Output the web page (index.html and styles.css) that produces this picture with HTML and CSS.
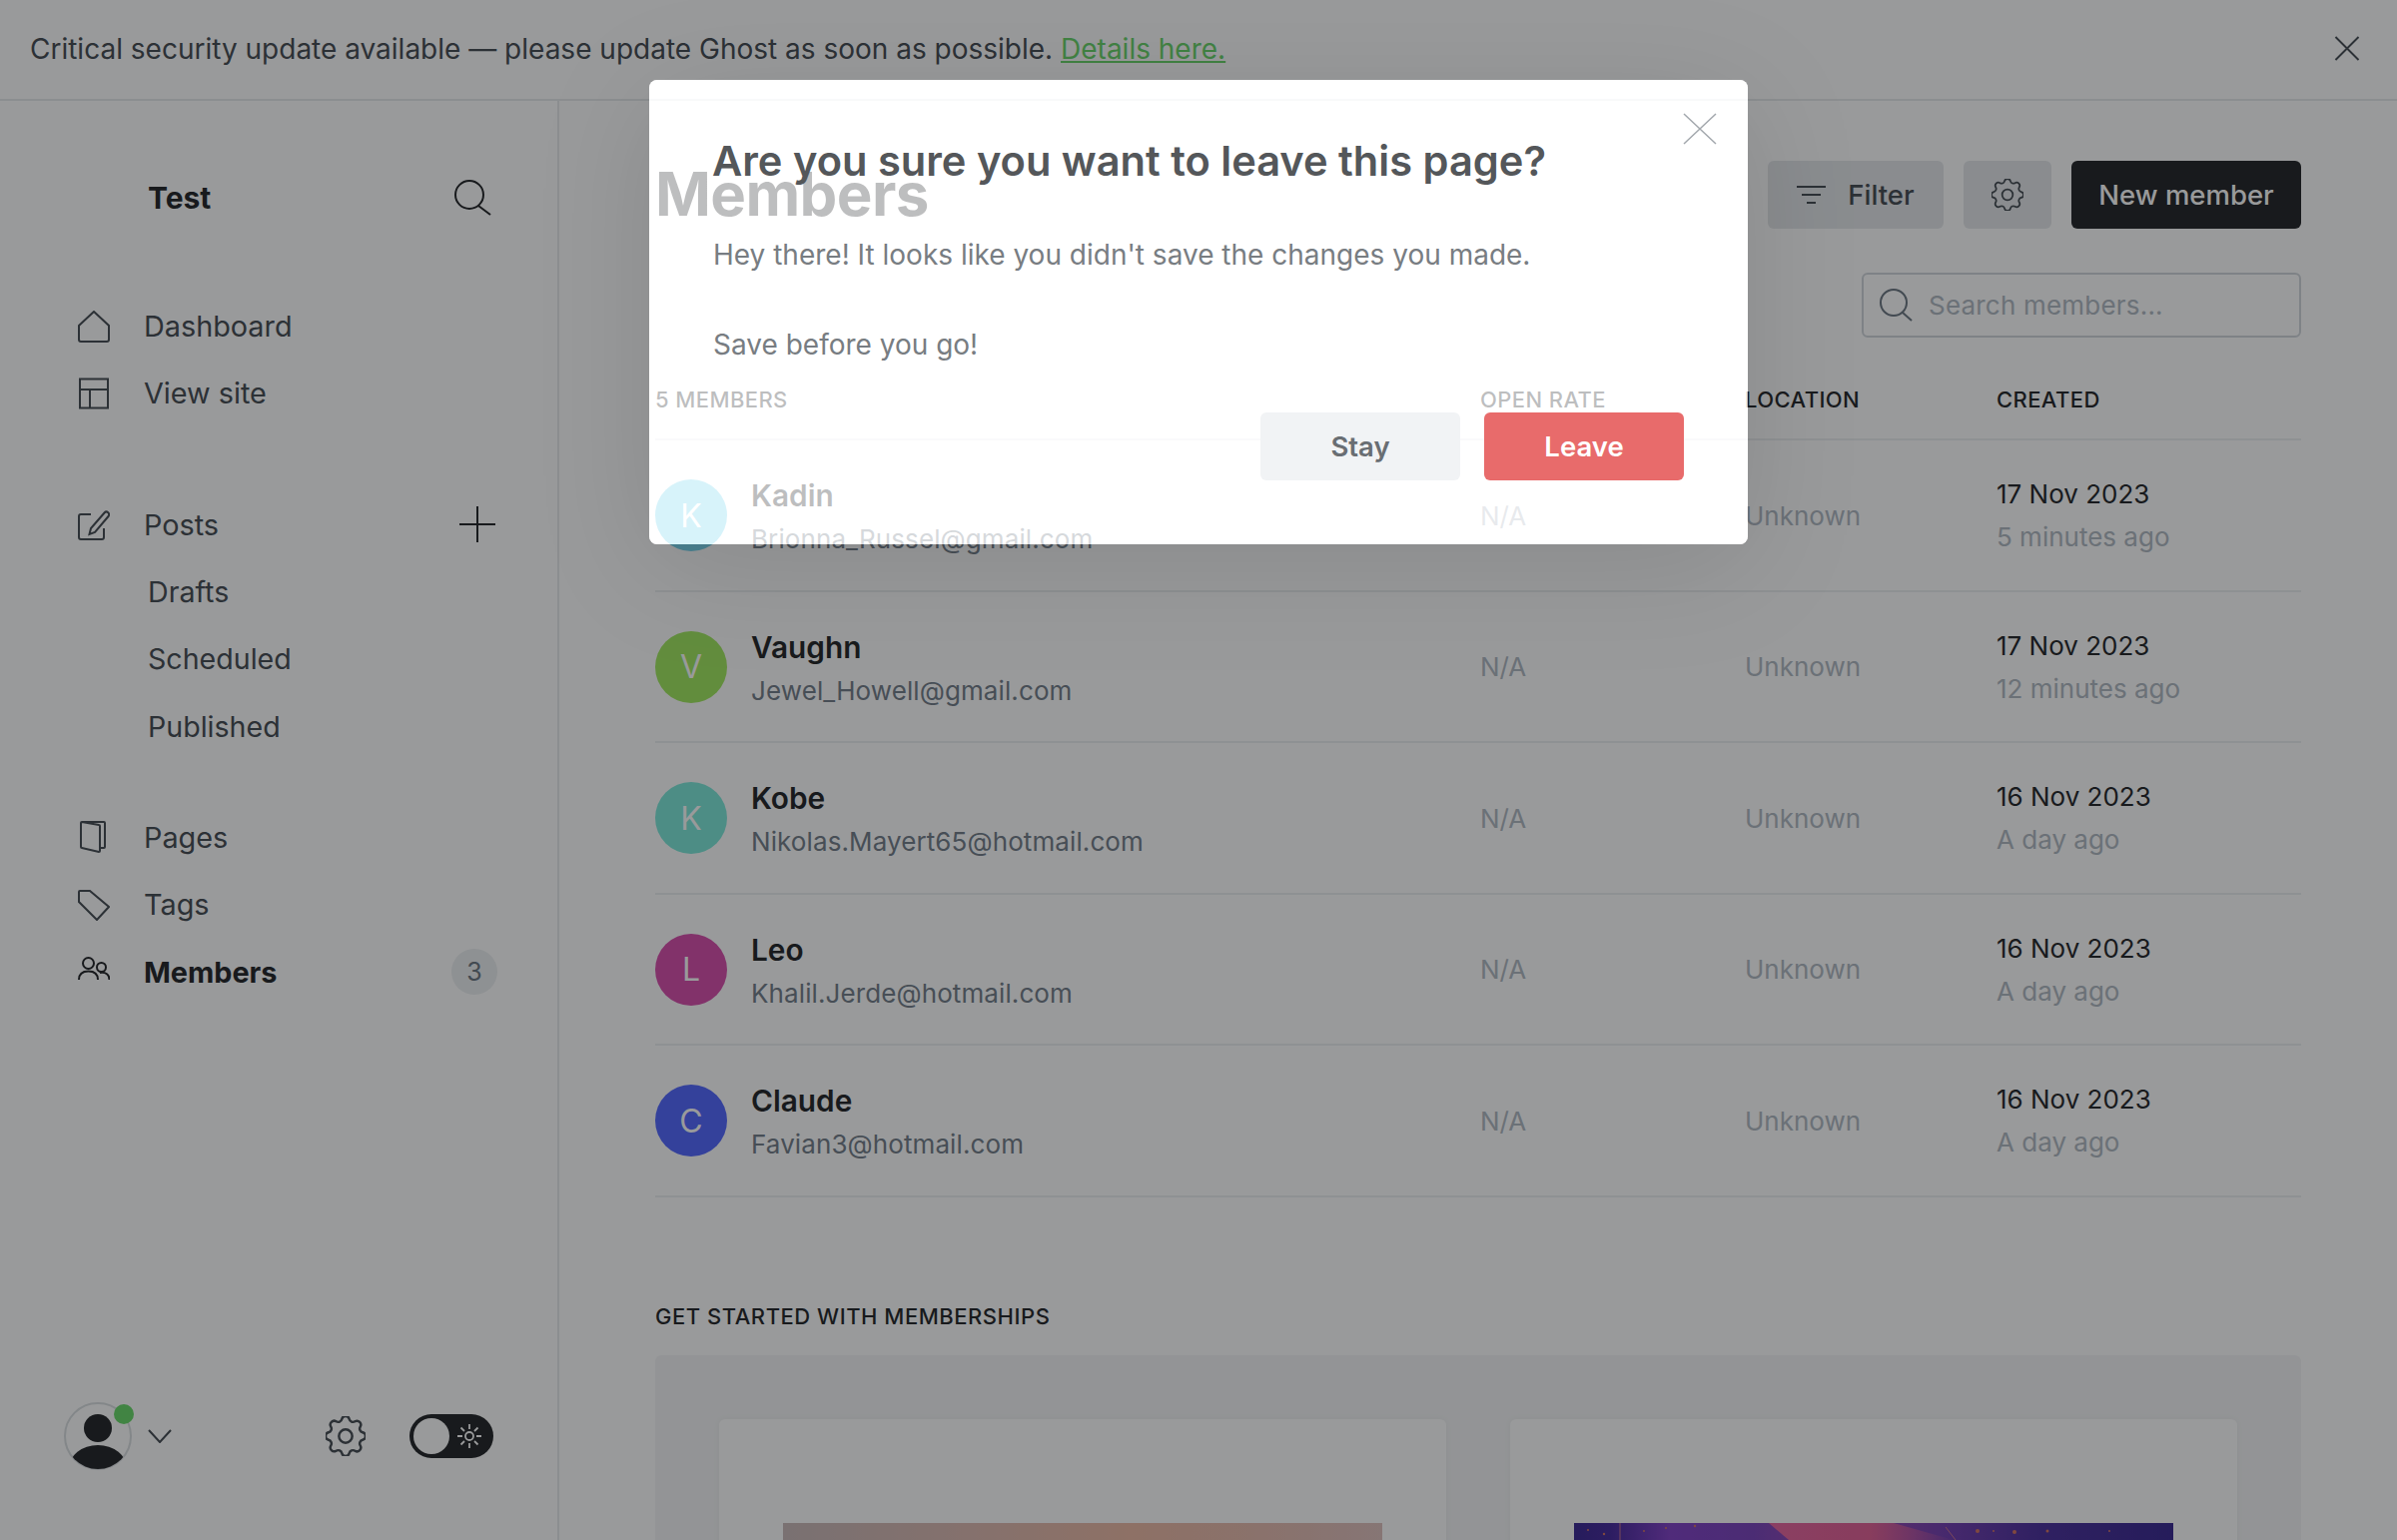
FILE: index.html
```html
<!DOCTYPE html>
<html lang="en">
<head>
<meta charset="utf-8">
<title>Members</title>
<link rel="stylesheet" href="styles.css">
</head>
<body>
<div class="app">
  <header class="banner">
    <p class="banner-text">Critical security update available — please update Ghost as soon as possible. <a href="#">Details here.</a></p>
    <svg class="banner-close" viewBox="0 0 26 26"><path d="M1 1 25 25M25 1 1 25"/></svg>
  </header>
  <div class="shell">
    <aside class="sidebar">
      <div class="brand">
        <span class="brand-name">Test</span>
        <svg class="brand-search" viewBox="0 0 38 36"><circle cx="16" cy="15" r="14"/><path d="M25 26 37 35"/></svg>
      </div>
      <nav class="nav-group">
        <a class="nav-row"><svg class="nav-icon" viewBox="0 0 32 32"><path d="M1 15 16 1 31 15V29a2 2 0 0 1-2 2H3a2 2 0 0 1-2-2Z"/></svg>Dashboard</a>
        <a class="nav-row"><svg class="nav-icon" viewBox="0 0 32 32"><path d="M2 1.500H30V30.500H2ZM2 12H30M12 12V30.500"/></svg>View site</a>
      </nav>
      <nav class="nav-group posts-group">
        <a class="nav-row"><svg class="nav-icon" viewBox="0 0 32 32"><path d="M13 6H3a2 2 0 0 0-2 2V29a2 2 0 0 0 2 2H24a2 2 0 0 0 2-2V20"/><path d="M13 20 11.500 26 17 24 30.500 8a2.500 2.500 0 0 0-4-3.500Z"/></svg>Posts<svg class="nav-plus" viewBox="0 0 36 36"><path d="M18 0V36M0 18H36"/></svg></a>
        <a class="nav-row nav-sub">Drafts</a>
        <a class="nav-row nav-sub">Scheduled</a>
        <a class="nav-row nav-sub">Published</a>
      </nav>
      <nav class="nav-group pages-group">
        <a class="nav-row"><svg class="nav-icon" viewBox="0 0 32 32"><path d="M4 1H26a1 1 0 0 1 1 1V26a1 1 0 0 1-1 1H22"/><path d="M4 1 21 4a1 1 0 0 1 1 1V30a1 1 0 0 1-1 1L4 27a1 1 0 0 1-1-1V2a1 1 0 0 1 1-1Z"/></svg>Pages</a>
        <a class="nav-row"><svg class="nav-icon" viewBox="0 0 32 32"><path d="M2 2H12L31 18 19 31 1 13V3a1 1 0 0 1 1-1Z"/></svg>Tags</a>
        <a class="nav-row nav-active"><svg class="nav-icon" viewBox="0 0 32 32"><circle cx="10.500" cy="7.500" r="5.500"/><circle cx="23.500" cy="11.500" r="4.500"/><path d="M1 24C1 18 5 15.500 10.500 15.500S20 18 20 24M22 17C28 16 31.500 19 31.500 24"/></svg>Members<span class="nav-badge">3</span></a>
      </nav>
      <div class="side-foot">
        <div class="user">
          <svg class="user-pic" viewBox="0 0 68 68"><defs><clipPath id="userclip"><circle cx="34" cy="34" r="33"/></clipPath></defs><circle class="user-ring" cx="34" cy="34" r="33"/><circle class="user-fill" cx="34" cy="26" r="14"/><ellipse class="user-fill" cx="34" cy="66" rx="29" ry="23" clip-path="url(#userclip)"/></svg>
          <span class="user-dot"></span>
        </div>
        <svg class="user-chevron" viewBox="0 0 24 14"><path d="M1 1 12 13 23 1"/></svg>
        <svg class="foot-gear" viewBox="3 3 18 18"><path d="M10.325 4.317c.426-1.756 2.924-1.756 3.35 0a1.724 1.724 0 002.573 1.066c1.543-.94 3.31.826 2.37 2.37a1.724 1.724 0 001.065 2.572c1.756.426 1.756 2.924 0 3.35a1.724 1.724 0 00-1.066 2.573c.94 1.543-.826 3.31-2.37 2.37a1.724 1.724 0 00-2.572 1.065c-.426 1.756-2.924 1.756-3.35 0a1.724 1.724 0 00-2.573-1.066c-1.543.94-3.31-.826-2.37-2.37a1.724 1.724 0 00-1.065-2.572c-1.756-.426-1.756-2.924 0-3.35a1.724 1.724 0 001.066-2.573c-.94-1.543.826-3.31 2.37-2.37.996.608 2.296.07 2.572-1.065z"/><circle cx="12" cy="12" r="3"/></svg>
        <div class="toggle">
          <span class="toggle-knob"></span>
          <svg class="toggle-sun" viewBox="0 0 24 24"><circle cx="12" cy="12" r="4"/><path d="M12 0V5M12 19V24M0 12H5M19 12H24M3.500 3.500 7 7M17 17 20.500 20.500M20.500 3.500 17 7M7 17 3.500 20.500"/></svg>
        </div>
      </div>
    </aside>
    <main class="main">
      <div class="page-head">
        <h1 class="page-title">Members</h1>
        <div class="page-actions">
          <button class="btn btn-grey btn-filter"><svg class="filter-icon" viewBox="0 0 29 18"><path d="M0 1H29M5 9H24M10 17H19"/></svg>Filter</button>
          <button class="btn btn-grey btn-gear"><svg class="gear-icon" viewBox="3 3 18 18"><path d="M10.325 4.317c.426-1.756 2.924-1.756 3.35 0a1.724 1.724 0 002.573 1.066c1.543-.94 3.31.826 2.37 2.37a1.724 1.724 0 001.065 2.572c1.756.426 1.756 2.924 0 3.35a1.724 1.724 0 00-1.066 2.573c.94 1.543-.826 3.31-2.37 2.37a1.724 1.724 0 00-2.572 1.065c-.426 1.756-2.924 1.756-3.35 0a1.724 1.724 0 00-2.573-1.066c-1.543.94-3.31-.826-2.37-2.37a1.724 1.724 0 00-1.065-2.572c-1.756-.426-1.756-2.924 0-3.35a1.724 1.724 0 001.066-2.573c-.94-1.543.826-3.31 2.37-2.37.996.608 2.296.07 2.572-1.065z"/><circle cx="12" cy="12" r="3"/></svg></button>
          <button class="btn btn-dark">New member</button>
        </div>
      </div>
      <div class="search-row">
        <div class="search-box">
          <svg class="search-icon" viewBox="0 0 33 33"><circle cx="14" cy="14" r="13"/><path d="M23 24 32 32"/></svg>
          <span class="search-text">Search members...</span>
        </div>
      </div>
      <div class="table">
        <div class="table-row table-head">
          <span>5 members</span><span>Open rate</span><span>Location</span><span>Created</span>
        </div>
        <div class="table-row member">
          <div class="who"><span class="avatar av-kadin">K</span><div class="stack who-text"><strong class="name">Kadin</strong><span class="email">Brionna_Russel@gmail.com</span></div></div>
          <span class="muted">N/A</span><span class="muted">Unknown</span>
          <div class="stack"><span class="date">17 Nov 2023</span><span class="ago">5 minutes ago</span></div>
        </div>
        <div class="table-row member">
          <div class="who"><span class="avatar av-vaughn">V</span><div class="stack who-text"><strong class="name">Vaughn</strong><span class="email">Jewel_Howell@gmail.com</span></div></div>
          <span class="muted">N/A</span><span class="muted">Unknown</span>
          <div class="stack"><span class="date">17 Nov 2023</span><span class="ago">12 minutes ago</span></div>
        </div>
        <div class="table-row member">
          <div class="who"><span class="avatar av-kobe">K</span><div class="stack who-text"><strong class="name">Kobe</strong><span class="email">Nikolas.Mayert65@hotmail.com</span></div></div>
          <span class="muted">N/A</span><span class="muted">Unknown</span>
          <div class="stack"><span class="date">16 Nov 2023</span><span class="ago">A day ago</span></div>
        </div>
        <div class="table-row member">
          <div class="who"><span class="avatar av-leo">L</span><div class="stack who-text"><strong class="name">Leo</strong><span class="email">Khalil.Jerde@hotmail.com</span></div></div>
          <span class="muted">N/A</span><span class="muted">Unknown</span>
          <div class="stack"><span class="date">16 Nov 2023</span><span class="ago">A day ago</span></div>
        </div>
        <div class="table-row member">
          <div class="who"><span class="avatar av-claude">C</span><div class="stack who-text"><strong class="name">Claude</strong><span class="email">Favian3@hotmail.com</span></div></div>
          <span class="muted">N/A</span><span class="muted">Unknown</span>
          <div class="stack"><span class="date">16 Nov 2023</span><span class="ago">A day ago</span></div>
        </div>
      </div>
      <h2 class="section-title">Get started with memberships</h2>
      <section class="promo">
        <div class="promo-card"><div class="promo-img img-warm"></div></div>
        <div class="promo-card">
          <svg class="promo-art" viewBox="0 0 600 17" preserveAspectRatio="none">
            <defs>
              <linearGradient id="galaxy"><stop offset="0" stop-color="#2f1a8c"/><stop offset=".06" stop-color="#3a1c96"/><stop offset=".16" stop-color="#7a35c4"/><stop offset=".3" stop-color="#7238b8"/><stop offset=".45" stop-color="#9a3fa8"/><stop offset=".62" stop-color="#6a32ac"/><stop offset=".78" stop-color="#3f2296"/><stop offset="1" stop-color="#2d1b8a"/></linearGradient>
              <linearGradient id="wedge"><stop offset="0" stop-color="#e65a98"/><stop offset=".55" stop-color="#e0568f"/><stop offset="1" stop-color="#e0568f" stop-opacity="0"/></linearGradient>
            </defs>
            <rect class="art-base" width="600" height="17"/>
            <polygon class="art-wedge" points="195,0 320,0 380,17 215,17"/>
            <path class="art-streak" d="M372 4 382 17M46 0V17"/>
            <g class="art-specks">
              <circle cx="404" cy="8" r="2"/><circle cx="441" cy="9" r="2"/><circle cx="474" cy="8" r="1.500"/><circle cx="121" cy="3" r="1.200"/><circle cx="30" cy="11" r="1.200"/><circle cx="14" cy="7" r="1"/><circle cx="92" cy="5" r="1"/><circle cx="536" cy="8" r="1"/><circle cx="420" cy="8" r="1"/><circle cx="70" cy="8" r="1"/>
            </g>
          </svg>
        </div>
      </section>
    </main>
  </div>
</div>
<div class="modal">
  <svg class="modal-close" viewBox="0 0 34 32"><path d="M1 1 33 31M33 1 1 31"/></svg>
  <h2 class="modal-title">Are you sure you want to leave this page?</h2>
  <p class="modal-body">Hey there! It looks like you didn't save the changes you made.<br><br>Save before you go!</p>
  <div class="modal-actions">
    <button class="modal-btn modal-stay">Stay</button>
    <button class="modal-btn modal-leave">Leave</button>
  </div>
</div>
</body>
</html>
```
FILE: styles.css
```css
* { box-sizing: border-box; }
html, body { margin: 0; padding: 0; height: 1542px; overflow: hidden; background: #fff; }
body { font-family: Inter, "Liberation Sans", sans-serif; color: #15171a; position: relative; }
svg { fill: none; stroke: currentColor; stroke-width: 2; display: block; flex: none; }
p, h1, h2 { margin: 0; }

.app { height: 1542px; display: flex; flex-direction: column; }

.banner { flex: none; height: 101px; border-bottom: 2px solid #e6e9eb; display: flex; align-items: center; justify-content: space-between; padding: 0 37px 2px 30px; }
.banner-text { font-size: 28px; color: #394047; }
.banner-text a { color: #5fd35f; text-decoration: underline; }
.banner-close { width: 26px; height: 25px; color: #394047; }

.shell { flex: 1; display: flex; min-height: 0; }

.sidebar { flex: none; width: 560px; border-right: 2px solid #e6e9eb; display: flex; flex-direction: column; padding: 0 62px 0 78px; }
.brand { display: flex; align-items: center; justify-content: space-between; height: 36px; margin-top: 79px; padding-left: 70px; padding-right: 4px; }
.brand-name { font-size: 30px; font-weight: 700; color: #15171a; }
.brand-search { width: 38px; height: 36px; }

.nav-group { display: flex; flex-direction: column; }
.nav-group:first-of-type { margin-top: 77px; }
.posts-group { margin-top: 64px; }
.pages-group { margin-top: 44px; }
.nav-row { height: 67.300px; display: flex; align-items: center; font-size: 28.800px; color: #394047; }
.nav-icon { width: 32px; height: 32px; margin-right: 34px; color: #394047; }
.nav-sub { padding-left: 70px; font-size: 28.600px; }
.nav-plus { width: 36px; height: 36px; margin-left: auto; margin-right: 0; color: #15171a; }
.nav-active { font-weight: 700; color: #15171a; }
.nav-active .nav-icon { color: #15171a; }
.nav-badge { margin-left: auto; margin-right: -2px; width: 46px; height: 46px; border-radius: 50%; background: #ebeef0; color: #626d79; display: flex; align-items: center; justify-content: center; font-size: 25px; font-weight: 400; }

.side-foot { margin-top: auto; margin-bottom: 70px; margin-left: -14px; height: 68px; display: flex; align-items: center; }
.user { position: relative; width: 68px; height: 68px; }
.user-pic { width: 68px; height: 68px; }
.user-ring { stroke: #d8dcdf; stroke-width: 2; }
.user-fill { fill: #15171a; stroke: none; }
.user-dot { position: absolute; right: -2px; top: 2px; width: 20px; height: 20px; border-radius: 50%; background: #60d860; }
.user-chevron { width: 24px; height: 14px; margin-left: 16px; color: #394047; }
.foot-gear { width: 40px; height: 40px; margin-left: 154px; color: #394047; stroke-width: 1.100; }
.toggle { width: 84px; height: 44px; margin-left: 44px; border-radius: 22px; background: #15171a; display: flex; align-items: center; justify-content: space-between; padding: 0 12px 0 4px; }
.toggle-knob { width: 36px; height: 36px; border-radius: 50%; background: #fff; }
.toggle-sun { width: 24px; height: 24px; color: #fff; stroke-width: 1.800; }

.main { flex: 1; min-width: 0; padding: 60px 96px 0 96px; overflow: hidden; }
.page-head { display: flex; align-items: center; justify-content: space-between; height: 68px; }
.page-title { font-size: 60px; font-weight: 700; letter-spacing: -0.600px; color: #15171a; margin-top: -2px; }
.page-actions { display: flex; gap: 20px; }
.btn { border: 0; height: 68px; border-radius: 6px; font: 500 27.500px Inter, "Liberation Sans", sans-serif; display: flex; align-items: center; justify-content: center; padding: 0; }
.btn-grey { background: #e3e6e9; color: #15171a; }
.btn-filter { width: 176px; gap: 22px; color: #394047; }
.btn-gear { width: 88px; }
.btn-dark { width: 230px; background: #15171a; color: #fff; }
.filter-icon { width: 29px; height: 18px; color: #394047; }
.gear-icon { width: 32px; height: 32px; color: #394047; stroke-width: 1; }

.search-row { display: flex; justify-content: flex-end; margin-top: 44px; }
.search-box { width: 440px; height: 65px; border: 2px solid #ced4d9; border-radius: 6px; display: flex; align-items: center; padding-left: 16px; gap: 16px; }
.search-icon { width: 33px; height: 33px; color: #626d79; }
.search-text { font-size: 26px; letter-spacing: 0.200px; color: #abb4be; }

.table { display: flex; flex-direction: column; }
.table-row { display: grid; grid-template-columns: 826px 265px 252px 1fr; border-bottom: 2px solid #ebeef0; }
.table-head { height: 103px; align-items: end; padding-bottom: 26px; font-size: 22px; font-weight: 500; text-transform: uppercase; letter-spacing: 0.400px; color: #15171a; }
.member { height: 151.500px; align-items: center; font-size: 26px; padding-top: 1px; }
.who { display: flex; align-items: center; gap: 24px; }
.avatar { width: 72px; height: 72px; border-radius: 50%; color: #fff; display: flex; align-items: center; justify-content: center; font-size: 32px; }
.av-kadin { background: #6fd2ec; }
.av-vaughn { background: #9ce755; }
.av-kobe { background: #76e7d8; }
.av-leo { background: #d543a7; }
.av-claude { background: #475dff; }
.stack { display: flex; flex-direction: column; line-height: 43px; }
.who-text { margin-top: 4px; }
.name { font-size: 29.800px; font-weight: 600; color: #15171a; }
.email { font-size: 26px; letter-spacing: 0.100px; color: #6b7682; }
.muted { color: #abb4be; }
.date { color: #15171a; }
.ago { color: #abb4be; }

.section-title { margin-top: 104px; font-size: 22px; line-height: 30px; font-weight: 500; text-transform: uppercase; letter-spacing: 0.520px; color: #15171a; }
.promo { margin-top: 24px; height: 400px; background: #f4f5f6; border-radius: 6px; padding: 64px; display: grid; grid-template-columns: 1fr 1fr; gap: 64px; }
.promo-card { background: #fff; border-radius: 6px; padding: 104px 64px 0; box-shadow: 0 0 6px rgba(0,0,0,.05); }
.promo-img { height: 240px; }
.img-warm { background: linear-gradient(90deg, #c6b4b4 0%, #dab4ac 30%, #ebb49e 58%, #e4b6a8 78%, #ddbdba 100%); }
.promo-art { width: 600px; height: 17px; }
.art-base { fill: url(#galaxy); stroke: none; }
.art-wedge { fill: url(#wedge); stroke: none; }
.art-streak { stroke: #c66a88; stroke-width: 1; }
.art-specks { fill: #d26a58; stroke: none; }

.modal { position: absolute; left: 650px; top: 80px; width: 1100px; height: 465px; border-radius: 8px; background: rgba(255,255,255,.72); box-shadow: 0 0 0 3000px rgba(28,30,34,.45), 0 20px 120px rgba(0,0,0,.12); padding: 62px 64px 64px 63px; display: flex; flex-direction: column; }
.modal-close { position: absolute; top: 33px; right: 31px; width: 34px; height: 32px; color: #a3a8ad; stroke-width: 1.500; }
.modal-title { font-size: 41.600px; line-height: 38px; font-weight: 600; color: #54575a; }
.modal-body { margin-top: 53px; margin-left: 1px; font-size: 28px; line-height: 45px; color: #787d82; }
.modal-actions { margin-top: auto; display: flex; justify-content: flex-end; gap: 24px; }
.modal-btn { width: 200px; height: 68px; border: 0; border-radius: 6px; font: 600 27.500px Inter, "Liberation Sans", sans-serif; }
.modal-stay { background: #f1f3f5; color: #696e73; }
.modal-leave { background: #e86b6b; color: #fff; }
```
